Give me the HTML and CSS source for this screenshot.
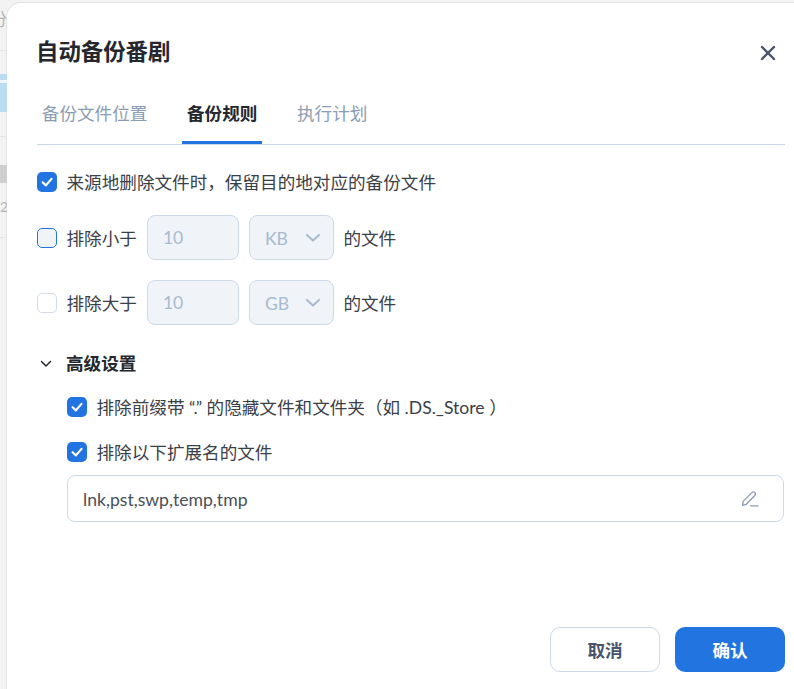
FILE: index.html
```html
<!DOCTYPE html>
<html lang="zh-CN">

<head>
    <meta charset="UTF-8">
    <meta name="viewport" content="width=device-width, initial-scale=1.0">
    <title>自动备份番剧</title>
    <link rel="stylesheet" href="styles.css">
</head>

<body>
    <div class="backdrop">
        <div class="backdrop-title">份</div>
        <div class="backdrop-row backdrop-row-selected"><span class="backdrop-mark"></span></div>
        <div class="backdrop-row">
            <span class="backdrop-thumb"></span>
            <span class="backdrop-num">2</span>
        </div>
    </div>

    <div class="dialog">
        <div class="dialog-header">
            <h2>自动备份番剧</h2>
            <svg class="close-icon" viewBox="0 0 16 16" width="16" height="16">
                <path d="M2 2L14 14M14 2L2 14" fill="none" stroke="#47536b" stroke-width="2.4" stroke-linecap="round"/>
            </svg>
        </div>

        <div class="tabs">
            <div class="tab">备份文件位置</div>
            <div class="tab tab-active">备份规则</div>
            <div class="tab">执行计划</div>
        </div>

        <div class="rule-row rule-row-first">
            <span class="check check-on">
                <svg viewBox="0 0 20 20" width="20" height="20"><path d="M5.6 10.2L8.9 13.4L14.5 6.9" fill="none" stroke="#fff" stroke-width="2.2" stroke-linecap="round" stroke-linejoin="round"/></svg>
            </span>
            <span class="label">来源地删除文件时，保留目的地对应的备份文件</span>
        </div>

        <div class="rule-row rule-row-size">
            <span class="check check-focus"></span>
            <span class="label">排除小于</span>
            <div class="fake-input">10</div>
            <div class="fake-select">
                <span class="select-value">KB</span>
                <svg viewBox="0 0 14 8" width="14" height="8"><path d="M1 1L7 6.6L13 1" fill="none" stroke="#a9bace" stroke-width="2" stroke-linecap="round" stroke-linejoin="round"/></svg>
            </div>
            <span class="label">的文件</span>
        </div>

        <div class="rule-row rule-row-size">
            <span class="check"></span>
            <span class="label">排除大于</span>
            <div class="fake-input">10</div>
            <div class="fake-select">
                <span class="select-value">GB</span>
                <svg viewBox="0 0 14 8" width="14" height="8"><path d="M1 1L7 6.6L13 1" fill="none" stroke="#a9bace" stroke-width="2" stroke-linecap="round" stroke-linejoin="round"/></svg>
            </div>
            <span class="label">的文件</span>
        </div>

        <div class="advanced-title">
            <svg viewBox="0 0 12 8" width="12" height="8"><path d="M1.5 1.5L6 6L10.5 1.5" fill="none" stroke="#262b33" stroke-width="1.5" stroke-linecap="round" stroke-linejoin="round"/></svg>
            <span>高级设置</span>
        </div>

        <div class="advanced-body">
            <div class="rule-row">
                <span class="check check-on">
                    <svg viewBox="0 0 20 20" width="20" height="20"><path d="M5.6 10.2L8.9 13.4L14.5 6.9" fill="none" stroke="#fff" stroke-width="2.2" stroke-linecap="round" stroke-linejoin="round"/></svg>
                </span>
                <span class="label">排除前缀带 “.” 的隐藏文件和文件夹（如 .DS._Store ）</span>
            </div>
            <div class="rule-row rule-row-ext">
                <span class="check check-on">
                    <svg viewBox="0 0 20 20" width="20" height="20"><path d="M5.6 10.2L8.9 13.4L14.5 6.9" fill="none" stroke="#fff" stroke-width="2.2" stroke-linecap="round" stroke-linejoin="round"/></svg>
                </span>
                <span class="label">排除以下扩展名的文件</span>
            </div>
            <div class="ext-field">
                <span class="ext-value">lnk,pst,swp,temp,tmp</span>
                <svg viewBox="0 0 18 18" width="18" height="18">
                    <path d="M1.6 15.4L2.2 11.4L10.9 2.6C11.7 1.8 13 1.8 13.8 2.6C14.6 3.4 14.6 4.7 13.8 5.5L5.2 14.3Z" fill="none" stroke="#8c9ab3" stroke-width="1.3" stroke-linejoin="round"/>
                    <path d="M9.5 15.8H17" fill="none" stroke="#8c9ab3" stroke-width="1.3" stroke-linecap="round"/>
                </svg>
            </div>
        </div>

        <div class="dialog-footer">
            <button class="btn btn-cancel" type="button">取消</button>
            <button class="btn btn-ok" type="button">确认</button>
        </div>
    </div>
</body>

</html>
```

FILE: styles.css
```css
body {
    font-family: Lato, "Noto Sans CJK SC", sans-serif;
    display: flex;
    height: 689px;
    margin: 0;
    overflow: hidden;
    background-color: #f3f3f3;
    color: #3a4048;
    font-size: 17.6px;
    line-height: 24px;
}

.backdrop {
    width: 7px;
    flex-shrink: 0;
    overflow: hidden;
    color: #b5b5b5;
}

.backdrop-title {
    width: 20px;
    height: 51px;
    margin-left: -11px;
    padding-top: 4px;
    box-sizing: border-box;
    border-bottom: 1px solid #e6e6e6;
    font-size: 18px;
    line-height: 30px;
}

.backdrop-row {
    position: relative;
    height: 101px;
    box-sizing: border-box;
    border-bottom: 1px solid #e6e6e6;
    overflow: hidden;
}

.backdrop-row-selected {
    height: 86px;
    padding-top: 23px;
}

.backdrop-row-selected::before {
    content: "";
    display: block;
    height: 38px;
    background-color: #b9dcf2;
}

.backdrop-mark {
    position: absolute;
    top: 29px;
    left: 0;
    width: 7px;
    height: 3px;
    background-color: #eef7fc;
}

.backdrop-thumb {
    display: block;
    height: 18px;
    margin-top: 28px;
    background-color: #cfcfcf;
}

.backdrop-num {
    display: block;
    margin-top: 16px;
    font-size: 14px;
    line-height: 16px;
}

.dialog {
    flex: 1;
    margin-top: 3px;
    padding: 0 9px 0 30px;
    background-color: #fff;
    border-radius: 14px 0 0 0;
    box-shadow: 0 0 0 1px #e4e4e4;
}

.dialog-header {
    display: flex;
    justify-content: space-between;
    align-items: center;
    height: 101px;
    padding-right: 9px;
    padding-bottom: 3px;
    box-sizing: border-box;
}

.dialog-header h2 {
    margin: 0 0 0 -1px;
    color: #24282e;
    font-size: 22.4px;
    line-height: 30px;
    font-weight: 700;
}

.close-icon {
    margin-top: 1px;
}

.tabs {
    display: flex;
    gap: 30px;
    height: 40px;
    border-bottom: 1px solid #c9d6e4;
}

.tab {
    height: 40px;
    padding: 0 4.8px;
    color: #8a9cb3;
    line-height: 20px;
    box-sizing: border-box;
}

.tab-active {
    border-bottom: 3px solid #2274e0;
    color: #24282e;
    font-weight: 700;
}

.rule-row {
    display: flex;
    align-items: center;
    gap: 10px;
    height: 20px;
}

.rule-row-first {
    margin-top: 27px;
}

.rule-row-size {
    height: 45px;
    margin-top: 20px;
}

.rule-row-first + .rule-row-size {
    margin-top: 23px;
}

.label {
    position: relative;
    top: 1px;
    margin-left: -0.5px;
}

.check {
    width: 20px;
    height: 20px;
    flex-shrink: 0;
    box-sizing: border-box;
    border: 1px solid #d2dce8;
    border-radius: 5px;
    background-color: #fff;
}

.check svg {
    display: block;
}

.check-on {
    border: none;
    background-color: #2274e0;
}

.check-focus {
    border-color: #2274e0;
    background-color: #f0f4f9;
}

.fake-input,
.fake-select {
    display: flex;
    align-items: center;
    height: 45px;
    box-sizing: border-box;
    border: 1px solid #cdd9e6;
    border-radius: 8px;
    background-color: #f0f4f9;
    color: #a9bace;
}

.fake-input {
    width: 92px;
    padding-left: 15px;
}

.fake-select {
    justify-content: space-between;
    width: 85px;
    padding: 0 13px 0 15px;
}

.select-value {
    position: relative;
    top: 1px;
}

.advanced-title {
    display: flex;
    align-items: center;
    gap: 14px;
    margin-top: 27px;
    padding-left: 3px;
    height: 24px;
    color: #24282e;
    font-weight: 700;
}

.advanced-body {
    margin-top: 21px;
    padding-left: 30px;
}

.rule-row-ext {
    margin-top: 25px;
}

.ext-field {
    display: flex;
    justify-content: space-between;
    align-items: center;
    height: 47px;
    margin: 13px 1px 0 0;
    padding: 0 24px 0 15px;
    box-sizing: border-box;
    border: 1px solid #cdd9e6;
    border-radius: 8px;
}

.ext-value {
    position: relative;
    top: 1px;
    color: #4a5058;
}

.dialog-footer {
    display: flex;
    justify-content: flex-end;
    gap: 15px;
    margin-top: 105px;
}

.btn {
    width: 110px;
    height: 45px;
    border-radius: 10px;
    font-family: inherit;
    font-size: 17.6px;
    font-weight: 700;
}

.btn-cancel {
    border: 1px solid #cdd9e6;
    background-color: #fff;
    color: #47536b;
}

.btn-ok {
    border: none;
    background-color: #2274e0;
    color: #fff;
}
```
